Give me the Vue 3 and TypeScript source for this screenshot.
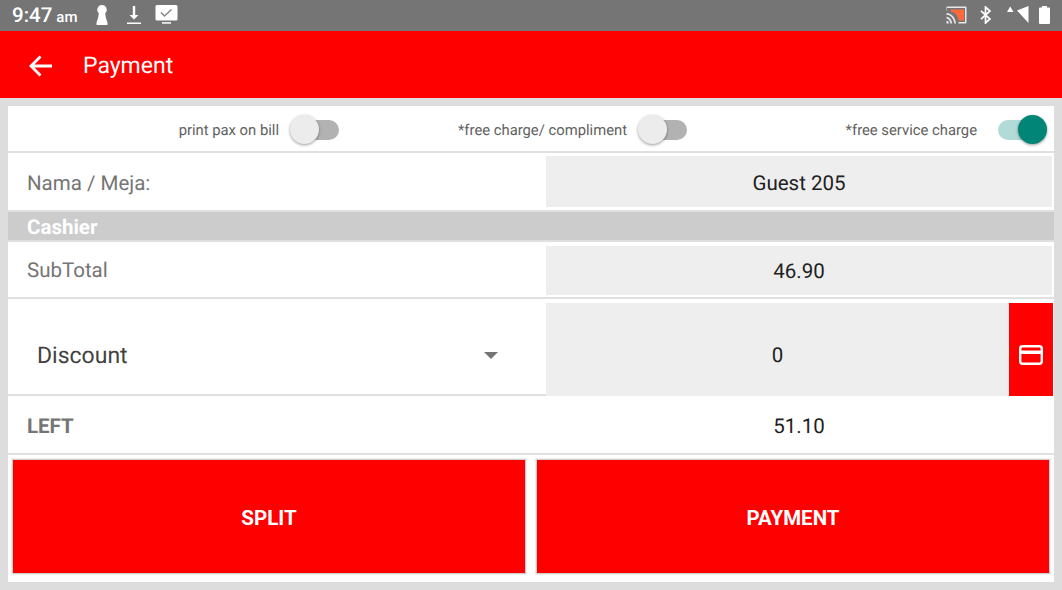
<template>
  <div class="screen">
    <div class="status-bar">
      <span class="clock">9:47<small>am</small></span>
      <svg class="st-icon keyhole" width="14" height="20" viewBox="0 0 14 20">
        <path d="M7 0a4.800 4.800 0 0 1 3.200 8.300c.3 3 .9 6 2.300 9.100V20H1.500v-2.600C2.900 14.300 3.500 11.300 3.800 8.300A4.800 4.800 0 0 1 7 0z" fill="#fff" />
      </svg>
      <svg class="st-icon download" width="16" height="20" viewBox="0 0 16 20">
        <path d="M6.800 1h2.400v9h3.300L8 14.500 3.500 10h3.300z M1 17.500h14V19H1z" fill="#fff" />
      </svg>
      <svg class="st-icon mail" width="23" height="20" viewBox="0 0 23 20">
        <rect x="0.500" y="0" width="22" height="15.500" rx="1.500" fill="#fff" />
        <path d="M6 7.500l3.500 3.500 7-6.500" fill="none" stroke="#8a8a8a" stroke-width="1.600" />
        <rect x="7" y="17.200" width="9" height="1.500" fill="#fff" />
      </svg>
      <span class="spacer"></span>
      <svg class="st-icon cast" width="21" height="18" viewBox="0 0 21 18">
        <path d="M1.500 0.500h18a1 1 0 0 1 1 1v15a1 1 0 0 1-1 1h-7V16h6.500V2h-18v2.500H0.500v-3a1 1 0 0 1 1-1z" fill="#e8e8e8" />
        <path d="M5 3.500h13v11h-5.500C12 9.800 9.500 6.500 5 5.500z" fill="#ff6a3c" />
        <path d="M0.500 7c5 .2 8.800 4.500 9.500 10.500H8.300C7.700 12.500 5 9 0.500 8.700z M0.500 10.800c3 .2 5.200 3 5.700 6.700H4.500C4.100 15 2.700 12.800 0.500 12.500z M0.500 14.800c1.500 0 2.500 1.200 2.500 2.700H0.500z" fill="#e8e8e8" />
      </svg>
      <svg class="st-icon bluetooth" width="12" height="18" viewBox="0 0 12 18">
        <path d="M1 4.800l9 8.200-4.500 4V1L10 5 1 13.200" fill="none" stroke="#fff" stroke-width="1.700" />
      </svg>
      <svg class="st-icon signal" width="22" height="18" viewBox="0 0 22 18">
        <path d="M0 6L3.200 0.500 6.500 6z" fill="#fff" />
        <path d="M21.500 0V17L10 4.500z" fill="#fff" />
      </svg>
      <svg class="st-icon battery" width="11" height="18" viewBox="0 0 11 18">
        <path d="M3 0h5v1.500h2a1 1 0 0 1 1 1V17a1 1 0 0 1-1 1H1a1 1 0 0 1-1-1V2.500a1 1 0 0 1 1-1h2z" fill="#fff" />
      </svg>
    </div>

    <header class="toolbar">
      <svg class="back" width="26" height="26" viewBox="0 0 26 26">
        <path d="M24 13H4 M12.500 3.500L3 13l9.500 9.500" fill="none" stroke="#fff" stroke-width="2.800" />
      </svg>
      <h1>Payment</h1>
    </header>

    <main class="panel">
      <div class="switches">
        <div v-for="opt in switches" :key="opt.label" class="switch-item" :class="opt.cls">
          <span>{{ opt.label }}</span>
          <span class="switch" :class="{ on: opt.on }"><i></i></span>
        </div>
      </div>

      <div class="row name-row">
        <label>Nama / Meja:</label>
        <div class="field">Guest 205</div>
      </div>

      <div class="section-title">Cashier</div>

      <div class="row subtotal-row">
        <label>SubTotal</label>
        <div class="field">46.90</div>
      </div>

      <div class="row discount-row">
        <div class="select">
          <span>Discount</span>
          <i class="caret"></i>
        </div>
        <div class="field discount-field">
          <span class="discount-value">0</span>
          <button class="card-btn" type="button">
            <svg width="24" height="20" viewBox="0 0 24 20">
              <rect x="1.200" y="1.200" width="21.600" height="17.600" rx="2.500" fill="none" stroke="#fff" stroke-width="2.400" />
              <rect x="2" y="5.500" width="20" height="3.500" fill="#fff" />
            </svg>
          </button>
        </div>
      </div>

      <div class="row left-row">
        <label>LEFT</label>
        <div class="field plain">51.10</div>
      </div>

      <div class="actions">
        <button type="button">SPLIT</button>
        <button type="button">PAYMENT</button>
      </div>
    </main>
  </div>
</template>

<script setup lang="ts">
interface SwitchOption {
  label: string
  on: boolean
  cls: string
}

const switches: SwitchOption[] = [
  { label: 'print pax on bill', on: false, cls: 'sw-a' },
  { label: '*free charge/ compliment', on: false, cls: 'sw-b' },
  { label: '*free service charge', on: true, cls: 'sw-c' },
]
</script>

<style>
html,
body {
  margin: 0;
  background: #dddddd;
}
</style>

<style scoped>
.screen {
  width: 1062px;
  height: 590px;
  overflow: hidden;
  display: flex;
  flex-direction: column;
  background: #dddddd;
  font-family: Roboto, "Liberation Sans", sans-serif;
  text-rendering: geometricPrecision;
}

.status-bar {
  height: 31px;
  flex: none;
  box-sizing: border-box;
  display: flex;
  align-items: center;
  padding: 0 12px 2px 12px;
  background: #757575;
  color: #fff;
}

.clock {
  font-size: 20.500px;
  font-weight: 500;
  width: 82px;
  margin-top: 2px;
}

.clock small {
  font-size: 15px;
  margin-left: 4px;
}

.st-icon {
  flex: none;
}

.keyhole {
  margin-left: 1px;
}

.download {
  margin-left: 17px;
}

.mail {
  margin-left: 13px;
}

.spacer {
  flex: 1;
}

.bluetooth {
  margin-left: 13px;
}

.signal {
  margin-left: 15px;
}

.battery {
  margin-left: 10px;
}

.toolbar {
  height: 67px;
  flex: none;
  box-sizing: border-box;
  display: flex;
  align-items: center;
  padding: 2px 0 0 28px;
  background: #ff0000;
  color: #fff;
}

.toolbar h1 {
  margin: 0 0 0 29px;
  font-size: 23px;
  font-weight: 400;
}

.panel {
  margin: 8px 8px 8px;
  width: 1046px;
  height: 476px;
  display: flex;
  flex-direction: column;
  background: #fff;
  color: #212121;
}

.switches {
  height: 45px;
  flex: none;
  box-sizing: content-box;
  border-bottom: 2px solid #e0e0e0;
  display: grid;
  grid-template-columns: 331px 348px 360px;
  font-size: 14.800px;
  color: #616161;
}

.switch-item {
  display: flex;
  align-items: center;
  justify-content: flex-end;
  gap: 11px;
  padding-top: 2px;
}

.switch {
  position: relative;
  width: 49px;
  height: 20px;
  display: block;
}

.switch::before {
  content: "";
  position: absolute;
  left: 12px;
  right: 0;
  top: 0;
  bottom: 0;
  border-radius: 10px;
  background: #b2b2b2;
}

.switch i {
  position: absolute;
  left: 0;
  top: -5px;
  width: 29px;
  height: 29px;
  border-radius: 50%;
  background: #ececec;
  box-shadow: 0 1px 3px rgba(0, 0, 0, 0.4);
}

.switch.on::before {
  background: #b2dad6;
  left: 0;
  right: 8px;
}

.switch.on i {
  left: 20px;
  background: #008577;
}

.sw-c .switch {
  margin-left: 10px;
}

.row {
  flex: none;
  display: flex;
  align-items: stretch;
  font-size: 20.500px;
}

.row label {
  width: 538px;
  flex: none;
  padding-left: 19px;
  padding-top: 4px;
  box-sizing: border-box;
  display: flex;
  align-items: center;
  color: #757575;
}

.field {
  width: 506px;
  flex: none;
  box-sizing: border-box;
  padding-top: 4px;
  display: flex;
  align-items: center;
  justify-content: center;
  background: #eeeeee;
  color: #212121;
}

.name-row {
  height: 57px;
  padding: 3px 0;
  box-sizing: border-box;
}

.section-title {
  height: 32px;
  flex: none;
  box-sizing: border-box;
  border-top: 2px solid #e0e0e0;
  border-bottom: 2px solid #e0e0e0;
  padding-left: 19px;
  background: #cccccc;
  color: #fff;
  font-size: 20.500px;
  font-weight: 700;
  line-height: 32px;
}

.subtotal-row {
  height: 57px;
  box-sizing: border-box;
  padding: 4px 0 2px;
  border-bottom: 2px solid #e0e0e0;
}

.subtotal-row label {
  padding-top: 0;
}

.subtotal-row .field {
  padding-top: 2px;
}

.discount-row {
  height: 97px;
  box-sizing: border-box;
  padding-top: 4px;
}

.select {
  width: 538px;
  flex: none;
  box-sizing: border-box;
  border-bottom: 2px solid #e0e0e0;
  padding: 17px 48px 0 29px;
  margin-top: -4px;
  display: flex;
  align-items: center;
  justify-content: space-between;
  font-size: 23px;
  color: #424242;
}

.caret {
  width: 0;
  height: 0;
  border-left: 7px solid transparent;
  border-right: 7px solid transparent;
  border-top: 7px solid #757575;
}

.discount-field {
  width: 507px;
  justify-content: flex-start;
  padding-top: 0;
}

.discount-value {
  flex: 1;
  padding-top: 12px;
  text-align: center;
}

.card-btn {
  width: 44px;
  height: 100%;
  flex: none;
  border: 0;
  padding: 10px 0 0;
  display: flex;
  align-items: center;
  justify-content: center;
  background: #ff0000;
}

.left-row {
  height: 57px;
  border-bottom: 2px solid #e0e0e0;
  box-sizing: content-box;
}

.left-row label {
  font-weight: 700;
}

.field.plain {
  background: none;
}

.actions {
  flex: 1;
  display: grid;
  grid-template-columns: 514px 514px;
  gap: 10px;
  padding: 4px 4px 8px 4px;
}

.actions button {
  border: 1px solid #cfcfcf;
  box-shadow: 0 0 0 1px #f0f0f0;
  padding: 2px 0 0;
  background: #ff0000;
  color: #fff;
  font-family: inherit;
  font-size: 20.500px;
  font-weight: 700;
}
</style>
